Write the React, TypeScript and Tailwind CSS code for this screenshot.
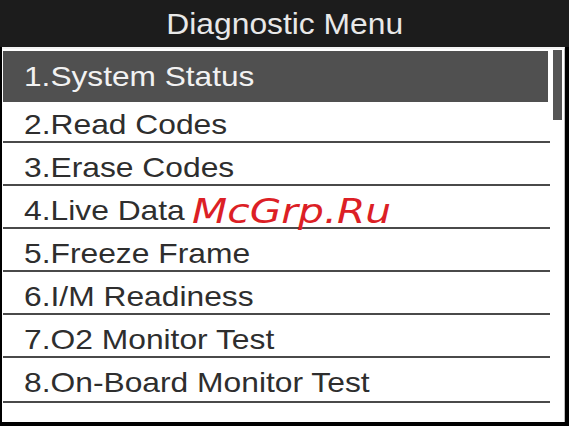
import React from 'react';

const items = [
  '2.Read Codes',
  '3.Erase Codes',
  '4.Live Data',
  '5.Freeze Frame',
  '6.I/M Readiness',
  '7.O2 Monitor Test',
  '8.On-Board Monitor Test',
];

export default function App() {
  return (
    <div className="relative w-[569px] h-[426px] bg-black flex flex-col overflow-hidden font-['Liberation_Sans',Arial,sans-serif]">
      {/* title bar */}
      <div className="h-[47px] shrink-0 bg-[#1c1c1c] flex items-center justify-center pt-px text-[30px] leading-none text-[#e8e8e8]">
        <span className="inline-block scale-x-[1.06]">Diagnostic Menu</span>
      </div>

      {/* screen body */}
      <div className="flex-1 ml-[2px] mr-[4px] mb-[4px] bg-white flex border-t-2 border-[#f4f4f4] border-r border-r-[#bdbdbd]">
        <div className="flex-1 flex flex-col pl-px pt-[2px]">
          <div className="h-[51px] mr-[2px] bg-[#505050] text-[#f2f2f2] flex items-center pl-[21px] text-[28px] leading-none">
            <span className="inline-block origin-left scale-x-[1.13]">1.System Status</span>
          </div>
          {items.map((label, i) => (
            <div
              key={label}
              className={`${i === 0 ? 'h-[41px] pb-[2px]' : i === 6 ? 'h-[45px] pb-[4px]' : 'h-[43px] pb-[2px]'} border-b-2 border-[#4a4a4a] flex items-end pl-[21px] text-[28px] leading-none text-[#2e2e2e]`}
            >
              <span className="inline-block origin-left scale-x-[1.135]">{label}</span>
            </div>
          ))}
        </div>
        {/* scroll track */}
        <div className="w-[14px] shrink-0 pt-px pl-[3px] pr-[2px]">
          <div className="h-[70px] bg-[#555]" />
        </div>
      </div>

      {/* watermark */}
      <div className="absolute left-[192px] top-[194px] text-[34px] italic text-[#dc1f26] font-['DejaVu_Sans',sans-serif] leading-none scale-x-[1.2] origin-left">
        McGrp.Ru
      </div>
    </div>
  );
}
